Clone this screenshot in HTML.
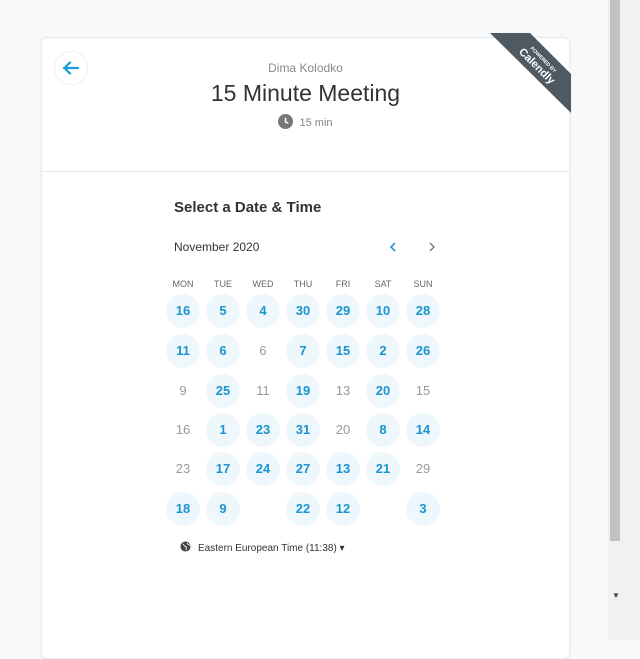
<!DOCTYPE html>
<html><head><style>
body{margin:0;width:640px;height:640px;background:#f8f9fb;font-family:"Liberation Sans",sans-serif;position:relative;overflow:hidden}
.card{position:absolute;left:41px;top:37px;width:527px;height:620px;background:#fff;border:1px solid #e8eaed;border-radius:6px;box-shadow:0 1px 4px rgba(0,0,0,.06);overflow:hidden}
.hr{position:absolute;left:0;right:0;top:133px;border-top:1px solid #e8e8e8}
.back{position:absolute;left:12px;top:13px;width:32px;height:32px;border-radius:50%;border:1px solid #eee}
.t{position:absolute;left:0;right:0;text-align:center}
.d{position:absolute;width:34px;height:34px;margin:-17px 0 0 -17px;border-radius:50%;text-align:center;line-height:34px;font-size:13px;font-weight:bold;color:#1a95cf;background:#eef7fc}
.p{background:none;color:#999;font-weight:normal}
.h{position:absolute;font-size:9px;color:#666;width:40px;margin-left:-20px;text-align:center}
.sb{position:absolute;left:608px;top:0;width:32px;height:640px;background:#f1f1f1}
.th{position:absolute;left:610px;top:0;width:10px;height:541px;background:#c1c1c1}
</style></head><body>
<div class="card">
<div class="back"><svg width="32" height="32" viewBox="0 0 32 32"><path d="M23 16H9M15 10.5l-5.5 5.5 5.5 5.5" stroke="#1a9ad6" stroke-width="2.2" fill="none" stroke-linecap="round" stroke-linejoin="round"/></svg></div>
<div class="t" style="top:23px;font-size:12px;color:#888">Dima Kolodko</div>
<div class="t" style="top:42px;font-size:23px;color:#333">15 Minute Meeting</div>
<div class="t" style="top:76px;font-size:11px;color:#888"><svg width="15" height="15" viewBox="0 0 16 16" style="vertical-align:-3px;margin-right:6px"><circle cx="8" cy="8" r="8" fill="#777"/><path d="M8 4v4.5l3 1.5" stroke="#fff" stroke-width="1.6" fill="none"/></svg>15 min</div>
<div class="hr"></div>
<div style="position:absolute;left:132px;top:161px;font-size:15px;font-weight:bold;color:#333">Select a Date &amp; Time</div>
<div style="position:absolute;left:132px;top:202px;font-size:12px;color:#333">November 2020</div>
<svg style="position:absolute;left:345px;top:202px" width="50" height="14"><path d="M8 3L4 7l4 4" stroke="#1a9ad6" stroke-width="1.6" fill="none"/><path d="M43 3l4 4-4 4" stroke="#777" stroke-width="1.4" fill="none"/></svg>
</div>
<svg style="position:absolute;left:0;top:0" width="640" height="640">
<polygon points="490,33 530,33 571,74 571,113" fill="#4f5962"/>
<g transform="translate(538,65) rotate(45)" fill="#fff" font-family="Liberation Sans" font-weight="bold" text-anchor="middle">
<text y="-6" font-size="5">POWERED BY</text>
<text y="5" font-size="11">Calendly</text>
</g>
</svg>
<div id="g"></div>
<div style="position:absolute;left:180px;top:541px;font-size:10px;color:#333"><svg width="11" height="11" viewBox="0 0 12 12" style="vertical-align:-1px;margin-right:7px"><circle cx="6" cy="6" r="5.5" fill="#444"/><path d="M3 3c2 1 1 3 3 3s0 3 1 4M8 2c0 2 2 2 3 3" stroke="#fff" fill="none"/></svg>Eastern European Time (11:38) ▾</div>
<div class="sb"></div><div class="th"></div>
<div style="position:absolute;left:612px;top:591px;font-size:8px;color:#444">▼</div>
<script>
var H=["MON","TUE","WED","THU","FRI","SAT","SUN"],g=document.getElementById('g'),s='';
H.forEach(function(h,i){s+='<div class="h" style="left:'+(183+i*40)+'px;top:279px">'+h+'</div>'});
var R=[["16","5","4","30","29","10","28"],["11","6","-6","7","15","2","26"],["-9","25","-11","19","-13","20","-15"],["-16","1","23","31","-20","8","14"],["-23","17","24","27","13","21","-29"],["18","9","","22","12","","3"]];
var Y=[311,351,391,430,469,509];
R.forEach(function(r,j){r.forEach(function(v,i){if(!v)return;var p=v[0]=='-';s+='<div class="d'+(p?' p':'')+'" style="left:'+(183+i*40)+'px;top:'+Y[j]+'px">'+(p?v.slice(1):v)+'</div>'})});
g.innerHTML=s;
</script>
</body></html>
